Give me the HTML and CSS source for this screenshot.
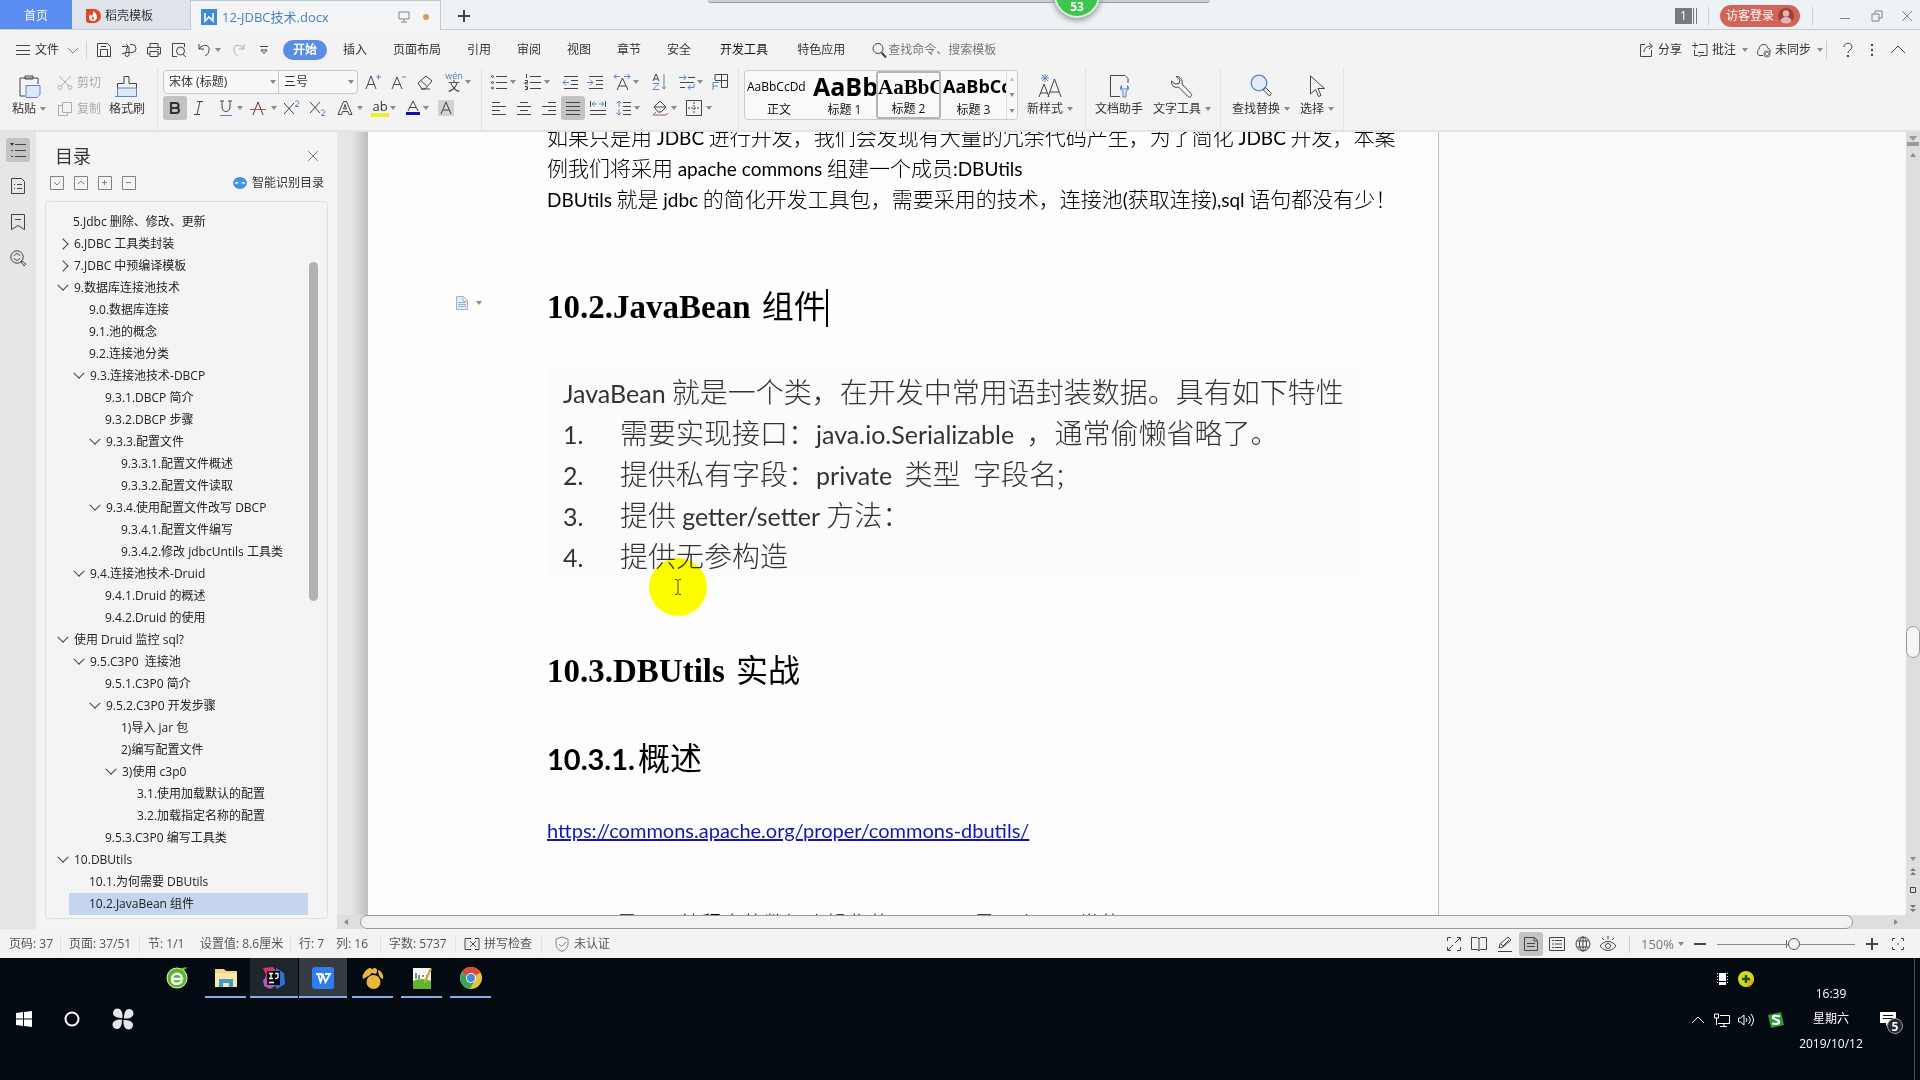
FILE: index.html
```html
<!DOCTYPE html>
<html lang="zh-CN">
<head>
<meta charset="utf-8">
<title>12-JDBC技术.docx</title>
<link rel="stylesheet" href="styles.css">
</head>
<body>
<div class="app">
  <header class="titlebar">
    <button class="tab tab-home">首页</button>
    <button class="tab tab-docer">
      <svg class="i16" viewBox="0 0 16 16"><path d="M1 1h8a7 7 0 0 1 0 14H4a3 3 0 0 1-3-3z" fill="#e0491f"/><path d="M8 3c3 2 4 4 4 6a4 4 0 0 1-8 0c0-1 1-2 1-3l2 2c1-1 1-3 1-5z" fill="#fff"/><path d="M8 8c1 1 1 3 0 4-2-1-1-3 0-4z" fill="#e0491f"/></svg>
      稻壳模板</button>
    <div class="tab tab-doc">
      <svg class="i16" viewBox="0 0 16 16"><path d="M0 0h16v16H0z" fill="#3f8ad8"/><path d="M4 4v8l4-4 4 4V4" fill="none" stroke="#fff" stroke-width="1.600"/></svg>
      <span class="doc-name">12-JDBC技术.docx</span>
      <svg class="i12" viewBox="0 0 12 12"><path d="M1 1h10v7H1zM6 8v3M3 11h6" class="s-gray"/></svg>
      <i class="dirty"></i>
    </div>
    <button class="newtab" aria-label="新建"><svg class="i12" viewBox="0 0 12 12"><path d="M6 0v12M0 6h12" class="s2"/></svg></button>
    <div class="win-tools">
      <span class="count"><b>1</b></span>
      <i class="vsep"></i>
      <button class="login">访客登录 <svg class="i16" viewBox="0 0 16 16"><circle cx="8" cy="8" r="8" fill="#a0403c"/><circle cx="8" cy="5.500" r="3.200" fill="#e3b5b5"/><path d="M2.500 13.500c0-6 11-6 11 0a8 8 0 0 1-11 0z" fill="#e3b5b5"/></svg></button>
      <i class="vsep"></i>
      <button aria-label="最小化"><svg class="i12" viewBox="0 0 12 12"><path d="M1 8.500h10" class="s-gray"/></svg></button>
      <button aria-label="还原"><svg class="i12" viewBox="0 0 12 12"><path d="M1 4h7v7H1zM4 4V1h7v7H8" class="s-gray"/></svg></button>
      <button aria-label="关闭"><svg class="i12" viewBox="0 0 12 12"><path d="M1 1l10 10M11 1L1 11" class="s-gray"/></svg></button>
    </div>
    <div class="float-bar"></div>
    <div class="float-ball">53</div>
  </header>

  <nav class="menubar">
    <div class="quick">
      <button class="lab"><svg class="i16" viewBox="0 0 16 16"><path d="M1 3.500h14M1 8.500h14M1 12.500h14" class="s"/></svg>文件</button>
      <svg class="i12" viewBox="0 0 12 12"><path d="M1 4l5 5 5-5" class="s-gray"/></svg>
      <i class="vsep"></i>
      <button aria-label="保存"><svg class="i16" viewBox="0 0 16 16"><path d="M1.500 14.500v-13h10l3 3v10zM4.500 14V7.500h7V14M5 4.500h5" class="s"/></svg></button>
      <button aria-label="输出"><svg class="i16" viewBox="0 0 16 16"><path d="M1 4.500h6M5 2l2.500 2.500L5 7M9 2.500h2a4 4 0 0 1 0 8H5.500M1 11.500c3 0 5-1 5-5M6 10.500a2 2 0 1 0 2 2V5" class="s"/></svg></button>
      <button aria-label="打印"><svg class="i16" viewBox="0 0 16 16"><path d="M4 5V1.500h8V5M4 12H1.500V5.500h13V12H12M4 9.500h8v5H4zM11 7.500h2" class="s"/></svg></button>
      <button aria-label="预览"><svg class="i16" viewBox="0 0 16 16"><path d="M13.500 5V1.500h-12v13H6M12 12.500l3 2.500" class="s"/><circle cx="9.500" cy="9" r="4" class="s"/><path d="M1.500 1.500v13" class="s"/></svg></button>
      <button aria-label="撤销"><svg class="i16" viewBox="0 0 16 16"><path d="M3 2v5h5M3 7c3-5 11-5 10 1 0 3-2 5-4 6" class="s"/></svg></button>
      <i class="caret"></i>
      <button aria-label="恢复"><svg class="i16" viewBox="0 0 16 16"><path d="M13 2v5H8M13 7C10 2 2 2 3 8c0 3 2 5 4 6" class="s-light"/></svg></button>
      <svg class="i12" viewBox="0 0 12 12"><path d="M2 2.500h8M3 6l3 3.500L9 6z" class="s"/></svg>
    </div>
    <div class="tabs">
      <button class="on">开始</button><button>插入</button><button>页面布局</button><button>引用</button><button>审阅</button><button>视图</button><button>章节</button><button>安全</button><button class="dark">开发工具</button><button>特色应用</button>
      <label class="search"><svg class="i16" viewBox="0 0 16 16"><circle cx="7" cy="6.500" r="5" class="s"/><path d="M10.500 10.500l4.500 5" class="s2"/></svg><input type="text" placeholder="查找命令、搜索模板"></label>
    </div>
    <div class="menu-right">
      <button class="lab"><svg class="i16" viewBox="0 0 16 16"><path d="M7 2.500H2.500v12h11V8M6 10c0-4 3-6 8-6M11 1l3.500 3L11 7" class="s"/></svg>分享</button>
      <button class="lab"><svg class="i16" viewBox="0 0 16 16"><path d="M7 2.500h8v11H9l-2 1-1-1H2.500V8M6 10.500h6M0 3.500h6M3 .5v6" class="s"/></svg>批注<i class="caret"></i></button>
      <button class="lab"><svg class="i16" viewBox="0 0 16 16"><path d="M8 13.500H4a3.500 3.500 0 0 1 0-6c0-6 8-7 9-1 2 0 2.500 2 2 4" class="s"/><circle cx="12" cy="12" r="3.500" fill="#888"/><path d="M10.500 10.500l3 3m0-3l-3 3" stroke="#fff"/></svg>未同步<i class="caret"></i></button>
      <i class="vsep"></i>
      <button aria-label="帮助"><svg class="i16" viewBox="0 0 16 16"><path d="M4 5c0-5 8-5 8 0 0 3-4 3-4 6" class="s"/><path d="M8 13v2" class="s2"/></svg></button>
      <button aria-label="更多"><svg class="i16" viewBox="0 0 16 16"><path d="M8 2v2M8 7v2M8 12v2" class="s2"/></svg></button>
      <button aria-label="收起"><svg class="i16" viewBox="0 0 16 16"><path d="M1 11l7-7 7 7" class="s"/></svg></button>
    </div>
  </nav>

  <section class="ribbon">
    <div class="grp clip">
      <button class="big"><svg class="i24" viewBox="0 0 24 24"><path d="M8 22H3V4h18v6M8 5V2h8v3z" class="s"/><path d="M9 11.500h14v9l-3 3H9z" fill="#dce8fa" stroke="#5d87c8"/></svg><span>粘贴<i class="caret"></i></span></button>
      <div class="two">
        <button class="lab off"><svg class="i16" viewBox="0 0 16 16"><path d="M2 1l10 10M14 1L4 11" class="s-light"/><circle cx="3" cy="12.500" r="2" class="s-light"/><circle cx="13" cy="12.500" r="2" class="s-light"/></svg>剪切</button>
        <button class="lab off"><svg class="i16" viewBox="0 0 16 16"><path d="M5.500 1.500h9v10h-9zM5 4.500H1.500v10h9V12" class="s-light"/></svg>复制</button>
      </div>
      <button class="big"><svg class="i24" viewBox="0 0 24 24"><path d="M2.500 14V9.500H9V2.500h5v7h7.500V14" class="s"/><path d="M2.500 14h19v8.500h-19zM0 22.500h3" fill="#dce8fa" stroke="#5d87c8"/></svg><span>格式刷</span></button>
    </div>
    <div class="grp font">
      <div class="row f1">
        <div class="combo"><div class="pick name"><select aria-label="字体"><option>宋体 (标题)</option></select><i class="caret"></i></div><div class="pick size"><select aria-label="字号"><option>三号</option></select><i class="caret"></i></div></div>
        <button aria-label="增大字号"><svg class="i16" viewBox="0 0 16 16"><path d="M1 15L6 2l5 13M3 10.500h6" class="s"/><path d="M11 3h5M13.500 .5v5" class="s-blue"/></svg></button>
        <button aria-label="减小字号"><svg class="i16" viewBox="0 0 16 16"><path d="M1 15L6 3l5 12M3 10.500h6" class="s"/><path d="M11 3h4" class="s-blue"/></svg></button>
        <button aria-label="清除格式"><svg class="i16" viewBox="0 0 16 16"><path d="M1 9l8-7 6 5-7 8H5zM4 6.500l6 6M4 15h9" class="s"/></svg></button>
        <button aria-label="拼音" class="pin"><small>wén</small><span>文</span></button><i class="caret"></i>
      </div>
      <div class="row f2">
        <button class="tog" aria-label="加粗"><svg class="i16" viewBox="0 0 16 16"><path d="M4 3h5a2.500 2.500 0 0 1 0 5H4zM4 8h5.500a2.500 2.500 0 0 1 0 5H4z" fill="none" stroke="#333" stroke-width="2.200"/></svg></button>
        <button aria-label="倾斜"><svg class="i16" viewBox="0 0 16 16"><path d="M6 1.500h6M3 14.500h6M9 1.500l-3 13" class="s"/></svg></button>
        <button aria-label="下划线"><svg class="i16" viewBox="0 0 16 16"><path d="M4 1v6c0 6 8 6 8 0V1M2 1h4M10 1h4" class="s"/><path d="M2 15.500h12" class="s-blue"/></svg></button><i class="caret"></i>
        <button aria-label="删除线"><svg class="i16" viewBox="0 0 16 16"><path d="M3 15L8 2l5 13" class="s"/><path d="M0 9.500h16" stroke="#b5543f"/></svg></button><i class="caret"></i>
        <button aria-label="上标"><svg class="i16" viewBox="0 0 16 16"><path d="M0 3l10 11M10 3L0 14" class="s"/><path d="M11 2c1-2 4-1 4 1l-4 3.500h4" class="s-blue"/></svg></button>
        <button aria-label="下标"><svg class="i16" viewBox="0 0 16 16"><path d="M0 2l10 11M10 2L0 13" class="s"/><path d="M11 11c1-2 4-1 4 1l-4 3.500h4" class="s-blue"/></svg></button>
        <button aria-label="文字效果"><svg class="i16" viewBox="0 0 16 16"><path d="M1 14.500L6.500 1.500h3l5.500 13h-3l-1-3H5.500l-1 3zM6.500 9L8 4.500 9.500 9z" class="s"/></svg></button><i class="caret"></i>
        <button aria-label="突出显示" class="hl"><span>ab</span></button><i class="caret"></i>
        <button aria-label="字体颜色"><svg class="i16" viewBox="0 0 16 16"><path d="M3 11L8 1l5 10M5 7.500h6" class="s"/><path d="M1 13.500h14" stroke="#1010b0" stroke-width="3"/></svg></button><i class="caret"></i>
        <button aria-label="字符底纹"><svg class="i16" viewBox="0 0 16 16"><path d="M0 0h16v16H0z" fill="#d2d2d2"/><path d="M3 14L8 2l5 12M5 10h6" class="s"/></svg></button>
      </div>
    </div>
    <div class="grp para">
      <div class="row p1">
        <svg class="i16" viewBox="0 0 16 16"><path d="M5 2.500h11M5 8.500h11M5 14.500h11" class="s"/><circle cx="1.500" cy="2.500" r="1" class="s"/><circle cx="1.500" cy="8.500" r="1" class="s"/><circle cx="1.500" cy="14" r="1" class="s"/></svg><i class="caret"></i>
        <svg class="i16" viewBox="0 0 16 16"><path d="M5 2.500h11M5 8.500h11M5 14.500h11M1.500 0v4M0 6.500h2.500v2H0v1.500h3M0 12.500h2.500v3H0M1 14h1" class="s"/></svg><i class="caret"></i>
        <svg class="i16" viewBox="0 0 16 16"><path d="M2 2.500h14M9 6.500h7M9 10.500h7M2 14.500h14" class="s"/><path d="M7 8.500H1M4 5.500l-3 3 3 3" class="s-blue"/></svg>
        <svg class="i16" viewBox="0 0 16 16"><path d="M2 2.500h14M9 6.500h7M9 10.500h7M2 14.500h14" class="s"/><path d="M0 8.500h6M3 5.500l3 3-3 3" class="s-blue"/></svg>
        <svg class="i16" viewBox="0 0 16 16"><path d="M3 16L8.500 4 14 16M5 12h7" class="s"/><path d="M0 2.500h6M2.500 0L0 2.500 2.500 5M10 2.500h6M13.500 0L16 2.500 13.500 5" class="s-blue"/></svg><i class="caret"></i>
        <svg class="i16" viewBox="0 0 16 16"><path d="M2 7l3-7 3 7M3 5h4" class="s"/><path d="M2 9.500h6l-6 6h6M13 0v15l-2-2.500M13 15l2-2.500" class="s-blue"/></svg>
        <svg class="i16" viewBox="0 0 16 16"><path d="M9 3.500h7M1 8.500h14M1 13.500h5" class="s"/><path d="M0 3.500h7M4.500 1L7 3.500 4.500 6M15 10v3.500H9M11.500 11L9 13.500l2.500 2.500" class="s-blue"/></svg><i class="caret"></i>
        <svg class="i16" viewBox="0 0 16 16"><path d="M3 6V.5h12.500v13H9M9.500 .5v13M3 6.500h12.500" class="s"/><path d="M1 16V8.500h6M1 12h5" class="s-blue"/></svg>
      </div>
      <div class="row p2">
        <svg class="i16" viewBox="0 0 16 16"><path d="M1 2.500h8M1 6.500h14M1 10.500h8M1 14.500h14" class="s"/></svg>
        <svg class="i16" viewBox="0 0 16 16"><path d="M4 2.500h8M1 6.500h14M4 10.500h8M1 14.500h14" class="s"/></svg>
        <svg class="i16" viewBox="0 0 16 16"><path d="M7 2.500h8M1 6.500h14M7 10.500h8M1 14.500h14" class="s"/></svg>
        <button class="tog" aria-label="两端对齐"><svg class="i16" viewBox="0 0 16 16"><path d="M1 2.500h14M1 6.500h14M1 10.500h14M1 14.500h14" class="s"/></svg></button>
        <svg class="i16" viewBox="0 0 16 16"><path d="M.5 1v6M15.500 1v6M0 10.500h16M0 14.500h16" class="s"/><path d="M2 4h5M4.500 1.500L2 4l2.500 2.500M9 4h5M11.500 1.500L14 4l-2.500 2.500" class="s-blue"/></svg>
        <svg class="i16" viewBox="0 0 16 16"><path d="M7 2.500h8M7 6.500h8M7 10.500h8M7 14.500h8" class="s"/><path d="M3 1v6M.5 3.500L3 1l2.500 2.500M3 9v6M.5 12.500L3 15l2.500-2.500" class="s-blue"/></svg><i class="caret"></i>
        <svg class="i16" viewBox="0 0 16 16"><path d="M2 7l6-6 6 6-5 5H6zM2 7h11" class="s"/><path d="M4 12l-3 3h13l2-2" stroke="#9a5f5f" fill="none"/></svg><i class="caret"></i>
        <svg class="i16" viewBox="0 0 16 16"><path d="M.5 .5h15v15H.5z" class="s"/><path d="M8 2v12M2 8h12" class="s" stroke-dasharray="2 1"/></svg><i class="caret"></i>
      </div>
    </div>
    <div class="grp style">
      <div class="gallery">
        <button><span class="s-normal">AaBbCcDd</span>正文</button>
        <button><span class="s-h1">AaBb</span>标题 1</button>
        <button class="sel"><span class="s-h2">AaBbC</span>标题 2</button>
        <button><span class="s-h3">AaBbCc</span>标题 3</button>
        <div class="gal-scroll"><i class="caret up"></i><i class="caret"></i><i class="caret bar"></i></div>
      </div>
      <button class="big"><svg class="i24" viewBox="0 0 24 24"><path d="M1 23L6 10l5 13M2.500 19h7M10 23L16.500 5 23 23M12 18h9" class="s"/><path d="M7 0v8M3 4h8M4 1l6 6M10 1L4 7" class="s-blue"/></svg><span>新样式<i class="caret"></i></span></button>
    </div>
    <div class="grp">
      <button class="big"><svg class="i24" viewBox="0 0 24 24"><path d="M13 22.500H3.500v-21H18l3 3V9" class="s"/><path d="M14.500 11.500c-2 2-1 5 1.500 6v5.500h3v-5.500c2.500-1 3.500-4 1.500-6V15h-6z" fill="#dce8fa" stroke="#5d87c8"/></svg><span>文档助手</span></button>
      <button class="big"><svg class="i24" viewBox="0 0 24 24"><path d="M6 2.500l4 3.500-1 3.500-4 .5-3.500-3c0 6 4 7 7 6l9.500 9.500c2 2 5-1 3-3L12 10c1-4-2-8-6-7.500z" class="s"/></svg><span>文字工具<i class="caret"></i></span></button>
    </div>
    <div class="grp find">
      <button class="big"><svg class="i24" viewBox="0 0 24 24"><circle cx="10" cy="9" r="7.800" fill="#e3edfa" stroke="#5d87c8" stroke-width="1.300"/><path d="M15 14.500l1.500-1 6 6-2 2.500-6-6z" class="s"/></svg><span>查找替换<i class="caret"></i></span></button>
      <button class="big"><svg class="i24" viewBox="0 0 24 24"><path d="M5.500 2v18l5-4.500 3 7 2.500-1-3-7h6.500z" class="s"/></svg><span>选择<i class="caret"></i></span></button>
    </div>
  </section>

  <main class="work">
    <aside class="rail">
      <button class="tog" aria-label="目录"><svg class="i16" viewBox="0 0 16 16"><path d="M5 2.500h11M5 8.500h11M5 14.500h11M1 8.500h2M1 14.500h2" class="s"/><path d="M0 1h4L2 4z" fill="#333"/></svg></button>
      <button aria-label="章节"><svg class="i16" viewBox="0 0 16 16"><path d="M1.500 .5h10l3 3v12h-13zM4 6.500h1M7 6.500h5M4 10.500h1M7 10.500h5" class="s"/></svg></button>
      <button aria-label="书签"><svg class="i16" viewBox="0 0 16 16"><path d="M1.500 .5h13v15l-6.500-4-6.500 4zM5 5.500h6" class="s"/></svg></button>
      <button aria-label="查找"><svg class="i16" viewBox="0 0 16 16"><circle cx="7" cy="7" r="6.200" class="s"/><path d="M4 6c1-3 5-3 6 0M10 8c-1 3-5 3-6 0M11 12l1-1 4 3-2 2z" class="s"/></svg></button>
    </aside>
    <aside class="outline">
      <div class="out-head"><h2>目录</h2><button aria-label="关闭"><svg class="i12" viewBox="0 0 12 12"><path d="M1 1l10 10M11 1L1 11" class="s-gray"/></svg></button></div>
      <div class="out-tools">
        <button aria-label="展开"><svg class="i14" viewBox="0 0 14 14"><path d="M.5 .5h13v13H.5zM4 6l3 3 3-3" class="s-gray"/></svg></button>
        <button aria-label="收起"><svg class="i14" viewBox="0 0 14 14"><path d="M.5 .5h13v13H.5zM4 8l3-3 3 3" class="s-gray"/></svg></button>
        <button aria-label="增加"><svg class="i14" viewBox="0 0 14 14"><path d="M.5 .5h13v13H.5zM4 6.500h5M6.500 4v5" class="s-gray"/></svg></button>
        <button aria-label="减少"><svg class="i14" viewBox="0 0 14 14"><path d="M.5 .5h13v13H.5zM4 6.500h5" class="s-gray"/></svg></button>
        <button class="smart"><svg class="i14" viewBox="0 0 14 14"><ellipse cx="7" cy="7" rx="7" ry="6" fill="#3f94e4"/><path d="M2.500 8c.5-2 2-2 2.500-.5M9 7.500c.5-1.500 2-1.500 2.500.5" fill="none" stroke="#fff" stroke-width="1.300"/></svg>智能识别目录</button>
      </div>
      <div class="tree-box">
        <ul class="tree">
          <li class="l1">5.Jdbc 删除、修改、更新</li>
          <li class="l1 shut">6.JDBC 工具类封装</li>
          <li class="l1 shut">7.JDBC 中预编译模板</li>
          <li class="l1 open">9.数据库连接池技术</li>
          <li class="l2">9.0.数据库连接</li>
          <li class="l2">9.1.池的概念</li>
          <li class="l2">9.2.连接池分类</li>
          <li class="l2 open">9.3.连接池技术-DBCP</li>
          <li class="l3">9.3.1.DBCP 简介</li>
          <li class="l3">9.3.2.DBCP 步骤</li>
          <li class="l3 open">9.3.3.配置文件</li>
          <li class="l4">9.3.3.1.配置文件概述</li>
          <li class="l4">9.3.3.2.配置文件读取</li>
          <li class="l3 open">9.3.4.使用配置文件改写 DBCP</li>
          <li class="l4">9.3.4.1.配置文件编写</li>
          <li class="l4">9.3.4.2.修改 jdbcUntils 工具类</li>
          <li class="l2 open">9.4.连接池技术-Druid</li>
          <li class="l3">9.4.1.Druid 的概述</li>
          <li class="l3">9.4.2.Druid 的使用</li>
          <li class="l1 open">使用 Druid 监控 sql?</li>
          <li class="l2 open">9.5.C3P0&nbsp; 连接池</li>
          <li class="l3">9.5.1.C3P0 简介</li>
          <li class="l3 open">9.5.2.C3P0 开发步骤</li>
          <li class="l4">1)导入 jar 包</li>
          <li class="l4">2)编写配置文件</li>
          <li class="l4 open">3)使用 c3p0</li>
          <li class="l5">3.1.使用加载默认的配置</li>
          <li class="l5">3.2.加载指定名称的配置</li>
          <li class="l3">9.5.3.C3P0 编写工具类</li>
          <li class="l1 open">10.DBUtils</li>
          <li class="l2">10.1.为何需要 DBUtils</li>
          <li class="l2 current">10.2.JavaBean 组件</li>
        </ul>
        <div class="tree-scroll"></div>
      </div>
    </aside>
    <div class="gutter"></div>
    <div class="canvas">
      <article class="page">
        <p>如果只是用 <span class="la">JDBC</span> 进行开发，我们会发现有大量的冗余代码产生，为了简化 <span class="la">JDBC</span> 开发，本案</p>
        <p>例我们将采用 <span class="la">apache commons</span> 组建一个成员<span class="la">:DBUtils</span></p>
        <p><span class="la">DBUtils</span> 就是 <span class="la">jdbc</span> 的简化开发工具包，需要采用的技术，连接池<span class="la">(</span>获取连接<span class="la">),sql</span> 语句都没有少！</p>
        <h2 class="first"><b>10.2.JavaBean</b> 组件<i class="cursor"></i>
          <span class="para-mark"><svg class="i14" viewBox="0 0 14 14"><path d="M1.500 .5h7l4 4v9h-11zM8 1v4h4M3 6.500h8M3 8.500h8M3 10.500h8" fill="#e6edf5" stroke="#9db3cc"/></svg><i class="caret"></i></span></h2>
        <div class="figure">
          <div class="intro"><b>JavaBean</b> 就是一个类，在开发中常用语封装数据。具有如下特性</div>
          <ol>
            <li><b>1.</b><span>需要实现接口：<b>java.io.Serializable</b> &nbsp;，通常偷懒省略了。</span></li>
            <li><b>2.</b><span>提供私有字段：<b>private</b> &nbsp;类型 &nbsp;字段名;</span></li>
            <li><b>3.</b><span>提供 <b>getter/setter</b> 方法：</span></li>
            <li><b>4.</b><span>提供无参构造</span></li>
          </ol>
          <div class="spot"><svg class="i16" viewBox="0 0 16 16"><path d="M5 .5h2l1 1 1-1h2M8 1v14M5 15.500h2l1-1 1 1h2" class="s"/></svg></div>
        </div>
        <h2><b>10.3.DBUtils</b> 实战</h2>
        <h3><b>10.3.1.</b>概述</h3>
        <p class="link"><a href="https://commons.apache.org/proper/commons-dbutils/">https://commons.apache.org/proper/commons-dbutils/</a></p>
        <p class="last"><span class="la">DBUtils</span> 是 <span class="la">java</span> 编程中的数据库操作使用工具，是一个工具类使用。</p>
      </article>
      <div class="beyond"></div>
    </div>
    <div class="vscroll">
      <svg class="i14" viewBox="0 0 14 14"><path d="M3 1h8L7 6zM1 7h12v4H1z" fill="#999"/></svg>
      <i class="caret up"></i>
      <div class="vtrack"><div class="vthumb"></div></div>
      <i class="caret"></i>
      <svg class="i14" viewBox="0 0 14 14"><path d="M4 6h6L7 3zM4 10h6L7 7z" fill="#777"/></svg>
      <svg class="i14" viewBox="0 0 14 14"><path d="M4.500 4.500h5v5h-5z" class="s"/></svg>
      <svg class="i14" viewBox="0 0 14 14"><path d="M4 4h6L7 7zM4 8h6l-3 3z" fill="#777"/></svg>
    </div>
    <div class="hscroll"><i class="caret left"></i><div class="hthumb"></div><i class="caret right"></i></div>
  </main>

  <footer class="status">
    <div class="st-left">
      <span>页码: 37</span><span class="ln">页面: 37/51</span><span class="ln">节: 1/1</span><span>设置值: 8.6厘米</span><span class="ln">行: 7</span><span>列: 16</span><span class="ln">字数: 5737</span>
      <button class="ln lab"><svg class="i16" viewBox="0 0 16 16"><path d="M7 2.500H1v11h6M11 2.500h4v11h-4M6 5l6 6M12 5l-6 6" class="s"/></svg>拼写检查</button>
      <button class="ln lab cert"><svg class="i16" viewBox="0 0 16 16"><path d="M8 1l6 2v5c0 4-3 6-6 7.500C5 14 2 12 2 8V3zM5 8l2.500 2.500L12 6" class="s-gray"/></svg>未认证</button>
    </div>
    <div class="st-right">
      <button aria-label="全屏"><svg class="i16" viewBox="0 0 16 16"><path d="M1.500 5V1.500H5M11 1.500h3.500V5M14.500 11v3.500H11M5 14.500H1.500V11M9 7l5-5M7 9l-5 5" class="s"/></svg></button>
      <button aria-label="阅读"><svg class="i16" viewBox="0 0 16 16"><path d="M8 3L6.500 1.500h-6v12h6L8 15l1.500-1.500h6v-12h-6zM8 3v12" class="s"/></svg></button>
      <button aria-label="写作"><svg class="i16" viewBox="0 0 16 16"><path d="M1 15.500h14M2 12l1-4 8-7 3 3-8 7zM4 8l2 2 6-6" class="s"/></svg></button>
      <button class="tog" aria-label="页面"><svg class="i16" viewBox="0 0 16 16"><path d="M1.500 1.500h10l3 3v10h-13zM11 2v3h3M4 7.500h8M4 10.500h8" class="s"/></svg></button>
      <button aria-label="大纲"><svg class="i16" viewBox="0 0 16 16"><path d="M.5 1.500h15v13H.5zM3 4.500h2M6 4.500h7M3 8h2M6 8h7M3 11.500h2M6 11.500h7" class="s"/></svg></button>
      <button aria-label="网页"><svg class="i16" viewBox="0 0 16 16"><circle cx="8" cy="8" r="7" class="s"/><ellipse cx="8" cy="8" rx="3.500" ry="7" class="s"/><path d="M2 5h12M2 11h12M8 1v14" class="s"/></svg></button>
      <button aria-label="护眼"><svg class="i16" viewBox="0 0 16 16"><path d="M0 10c4-6 12-6 16 0-4 6-12 6-16 0zM8 0v3M2 2l2 2M14 2l-2 2" class="s"/><circle cx="8" cy="10" r="2.500" class="s"/></svg></button>
      <i class="vsep"></i>
      <button class="zoom">150%<i class="caret"></i></button>
      <button aria-label="缩小"><svg class="i12" viewBox="0 0 12 12"><path d="M0 6h12" class="s2"/></svg></button>
      <input type="range" aria-label="缩放" min="0" max="100" value="56">
      <button aria-label="放大"><svg class="i12" viewBox="0 0 12 12"><path d="M0 6h12M6 0v12" class="s2"/></svg></button>
      <button aria-label="适合"><svg class="i12" viewBox="0 0 12 12"><path d="M.5 3V.5H3M9 .5h2.500V3M11.500 9v2.500H9M3 11.500H.5V9M5 6h2" class="s"/></svg></button>
    </div>
  </footer>

  <div class="taskbar">
    <div class="start">
      <button aria-label="开始"><svg class="i22" viewBox="0 0 22 22"><path d="M3 5l7-1v6.500H3zM11 4l8-1v7.500h-8zM3 11.500h7V18l-7-1zM11 11.500h8V19l-8-1z" fill="#fff"/></svg></button>
      <button aria-label="搜索"><svg class="i22" viewBox="0 0 22 22"><circle cx="11" cy="11" r="6.500" fill="none" stroke="#fff" stroke-width="2"/></svg></button>
      <button aria-label="桌面"><svg class="i22" viewBox="0 0 22 22"><g fill="#e4e6e8"><path d="M10.500 10C6 10 1 9 1 5a4.500 4.500 0 0 1 4.500-4.500c4 0 5.500 5 5 9.500z"/><path d="M12 10.500C12 6 13 1 17 1a4.500 4.500 0 0 1 4.500 4.500c0 4-5 5.500-9.500 5z"/><path d="M11.500 12c4.500 0 9.500 1 9.500 5a4.500 4.500 0 0 1-4.500 4.500c-4 0-5.500-5-5-9.500z"/><path d="M10 11.500c0 4.500-1 9.500-5 9.500A4.500 4.500 0 0 1 .5 16.500c0-4 5-5.500 9.500-5z"/></g></svg></button>
    </div>
    <div class="apps">
      <button class="plain" aria-label="浏览器"><svg class="i22" viewBox="0 0 22 22"><circle cx="11" cy="11" r="10.500" fill="#d5f0b5"/><circle cx="11" cy="11" r="9.500" fill="#58b52c"/><path d="M6 12h10c0-7-10-7-10 0 0 6 7 6 10 2" fill="none" stroke="#fff" stroke-width="2.500"/><path d="M14 2c2-1 5-2 8-1-2 0-4 1-5 3z" fill="#76cf3a"/></svg></button>
      <button aria-label="文件夹"><svg class="i22" viewBox="0 0 22 22"><path d="M0 2h9l2 2h11v16H0z" fill="#f5d77c"/><path d="M0 6h22v14H0z" fill="#fbe7a0"/><path d="M4 20v-8h14v8h-4v-4H8v4z" fill="#3a9fcf"/></svg></button>
      <button class="act" aria-label="IntelliJ"><svg class="i22" viewBox="0 0 22 22"><path d="M0 1l10-1 4 6-8 9-5-2 2-5z" fill="#d4366c"/><path d="M0 13l8-4 4 10-5 3-6-3z" fill="#b45ab8"/><path d="M13 1l8 5 1 11-8 5-4-6z" fill="#2f6fd8"/><path d="M4 4h13v14H4z" fill="#0a0a10"/><path d="M6 6.500h4M8 6.500v5M6 11.500h4M12 6.500h3v3.500q0 1.500-3 1.500M6 15.500h5" stroke="#fff" fill="none" stroke-width="1.300"/></svg></button>
      <button class="act cur" aria-label="WPS"><svg class="i22" viewBox="0 0 22 22"><rect width="22" height="22" rx="3" fill="#2f7ef0"/><path d="M4 7h5l2 4M6 7l2.500 8L11 8l2.500 7L18 7h-5" stroke="#fff" fill="none" stroke-width="1.800"/></svg></button>
      <button aria-label="DBeaver"><svg class="i22" viewBox="0 0 22 22"><circle cx="11.500" cy="15" r="7" fill="#e8b83a"/><path d="M1 12C-1 8 5 1 8 1c3 0 3 4 0 7zM10 6c-1-3 1-5 3-5s3 3 1 6zM16 3c4 1 6 6 5 9-2 0-5-4-5-9z" fill="#e8b83a"/></svg></button>
      <button aria-label="编辑器"><svg class="i22" viewBox="0 0 22 22"><path d="M2 1h18v20H2z" fill="#f4f6ef"/><path d="M2 14q9-4 18 0v8H2z" fill="#5fb52c"/><path d="M5 6v6M8 8v4M11 9h2M15 9h2" stroke="#222"/><path d="M13 14l6-13 2 1-6 13-2 2z" fill="#d8a13a"/></svg></button>
      <button aria-label="Chrome"><svg class="i22" viewBox="0 0 22 22"><circle cx="11" cy="11" r="11" fill="#e8c33c"/><path d="M11 11L1.500 5.500a11 11 0 0 1 19 0z" fill="#d94a3d"/><path d="M11 11L1.500 5.500A11 11 0 0 0 10 22l5-9z" fill="#3ba55a"/><circle cx="11" cy="11" r="5" fill="#fff"/><circle cx="11" cy="11" r="4" fill="#4a86e8"/></svg></button>
    </div>
    <div class="tray">
      <span></span>
      <svg class="i16" viewBox="0 0 16 16"><path d="M5 2h7v12H5z" fill="#fff"/><path d="M3.500 2v12M13.500 2v12" stroke="#fff" stroke-dasharray="1 2"/><path d="M5 10.500h7" stroke="#000"/></svg>
      <svg class="i16" viewBox="0 0 16 16"><circle cx="8" cy="8" r="8" fill="#cfdc1e"/><path d="M8 16a8 8 0 0 0 8-8l-4 1z" fill="#f0a515"/><path d="M8 4v8M4 8h8" stroke="#234d0c" stroke-width="2.500"/></svg>
      <span></span>
      <svg class="i16" viewBox="0 0 16 16"><path d="M2 11l6-6 6 6" class="s-white"/></svg>
      <svg class="i16" viewBox="0 0 16 16"><path d="M6 3.500h9.500v8H4M.5 2h4v4h-4zM2.500 6v7M10 12v2.500M6 14.500h7" class="s-white"/></svg>
      <svg class="i16" viewBox="0 0 16 16"><path d="M.5 6v4h2l3.500 3V3L2.500 6zM8 6q2 2 0 4M10.500 4q3.500 4 0 8M13 2q5 6 0 12" class="s-white"/></svg>
      <svg class="i16" viewBox="0 0 16 16"><path d="M0 3l13-3 3 13-13 3z" fill="#2f9c3c"/><path d="M12 4.500q-8-2-7 1.500l6 3q1 4-7 2.500" stroke="#fff" stroke-width="2.200" fill="none"/></svg>
    </div>
    <time class="clock"><span>16:39</span><span>星期六</span><span>2019/10/12</span></time>
    <div class="notice"><svg class="i16" viewBox="0 0 16 16"><path d="M0 1h16v11H9l-3 3v-3H0z" fill="#fff"/><path d="M3 4.500h10M3 7.500h10" stroke="#111"/></svg><b>5</b></div>
  </div>
</div>
</body>
</html>
```
FILE: styles.css
```css
* { box-sizing: border-box; }
body { margin: 0; font: 12px/18px "Open Sans", "Noto Sans CJK SC", sans-serif; color: #333; }
button { border: 0; padding: 0; margin: 0; background: none; font: inherit; color: inherit; display: flex; align-items: center; justify-content: center; white-space: nowrap; }
svg { display: block; flex: none; overflow: visible; }
.app { height: 100vh; display: flex; flex-direction: column; overflow: hidden; background: #f3f3f3; }
.i12 { width: 12px; height: 12px; }
.i14 { width: 14px; height: 14px; }
.i16 { width: 16px; height: 16px; }
.i22 { width: 22px; height: 22px; }
.i24 { width: 24px; height: 24px; }
.s { fill: none; stroke: #444; stroke-width: 1; }
.s2 { fill: none; stroke: #444; stroke-width: 2; }
.s-gray { fill: none; stroke: #808488; }
.s-light { fill: none; stroke: #b0b0b0; }
.s-blue { fill: none; stroke: #5d87c8; }
.s-white { fill: none; stroke: #fff; }
.caret { display: block; flex: none; width: 6px; height: 4px; background: #8a8a8a; clip-path: polygon(0 0, 100% 0, 50% 100%); }
.caret.up { clip-path: polygon(50% 0, 100% 100%, 0 100%); }
.caret.left { width: 4px; height: 6px; clip-path: polygon(0 50%, 100% 0, 100% 100%); }
.caret.right { width: 4px; height: 6px; clip-path: polygon(0 0, 100% 50%, 0 100%); }
.vsep { display: block; width: 1px; height: 18px; background: #cfcfcf; }
.lab { gap: 4px; }
.tog { width: 24px; height: 24px; border-radius: 3px; background: #c3c3c3; }

/* title bar */
.titlebar { position: relative; display: flex; height: 30px; flex: none; background: #eef2f5; border-bottom: 1px solid #c2ced8; }
.tab { padding-top: 3px; }
.tab-home { width: 72px; background: #5b8cf0; color: #fff; }
.tab-docer { width: 119px; background: #dfe4ea; justify-content: flex-start; padding-left: 13px; gap: 4px; border-right: 1px solid #bccad6; }
.tab-doc { width: 250px; height: 30px; display: flex; align-items: center; padding: 2px 11px 0 10px; gap: 5px; background: #f3f5f7; border: solid #bccad6; border-width: 1px 1px 0 0; color: #4a7fc0; }
.doc-name { font-size: 13px; flex: 1; }
.dirty { width: 6px; height: 6px; border-radius: 50%; background: #dd9a50; margin: 0 0 0 8px; }
.newtab { width: 46px; padding-top: 2px; }
.win-tools { margin-left: auto; display: grid; padding-top: 2px; grid-template-columns: 33px 12px 92px 27px 32px 30px 19px; align-items: center; justify-items: start; }
.count { border-right: 4px double #777; padding-right: 1px; display: flex; }
.count b { background: #757a7c; color: #fff; width: 17px; height: 16px; line-height: 16px; text-align: center; font-weight: 400; }
.login { width: 80px; height: 22px; border-radius: 11px; background: #d4645a; color: #fff; gap: 4px; }
.float-bar { position: absolute; left: 708px; top: 0; width: 502px; height: 3px; background: #cdd1d3; border-bottom: 1px solid #999d9f; border-radius: 0 0 4px 4px; }
.float-ball { position: absolute; left: 1054px; top: -28px; width: 46px; height: 46px; border-radius: 50%; background: #3fc44e; border: 2px solid #d5eddb; box-shadow: 0 2px 6px #888; color: #fff; font-weight: 700; line-height: 18px; padding-top: 24px; text-align: center; }

/* menu bar */
.menubar { height: 38px; flex: none; display: flex; align-items: center; padding-top: 2px; background: #f3f3f3; }
.quick { display: grid; padding-left: 15px; grid-template-columns: 52px 19px 10px 25px 25px 25px 25px 19px 16px 27px 25px; align-items: center; justify-items: start; }
.tabs { display: flex; align-items: center; gap: 26px; flex: 1; min-width: 0; }
.tabs .on { width: 44px; height: 20px; border-radius: 10px; background: #5b8ce6; color: #fff; font-weight: 700; margin-right: -10px; }
.tabs .dark { color: #111; margin: 0 3px; }
.search { display: flex; align-items: center; gap: 1px; }
.search input { border: 0; padding: 0; background: none; font: inherit; width: 130px; }
.search input::placeholder { color: #777; opacity: 1; }
.menu-right { display: grid; grid-template-columns: 54px 63px 71px 14px 24px 26px 30px; align-items: center; justify-items: start; }
.menu-right .caret { margin-left: 2px; }

/* ribbon */
.ribbon { height: 64px; flex: none; display: flex; background: #f3f3f3; border-bottom: 2px solid #e4e4e4; }
.grp { display: flex; padding: 2px 9px 0 9px; border-right: 1px solid #e2e2e2; gap: 10px; align-items: flex-start; }
.big { flex-direction: column; gap: 2px; height: 50px; }
.big span { display: flex; align-items: center; gap: 4px; }
.big .i24 { margin-top: 2px; }
.clip { width: 158px; padding-left: 12px; gap: 8px; }
.clip .two { display: grid; gap: 8px; padding-top: 4px; margin-left: 3px; }
.off { color: #aaa; }
.font, .para { flex-direction: column; gap: 2px; }
.font { padding-left: 5px; width: 324px; }
.para { width: 257px; padding-left: 9px; }
.row { display: grid; align-items: center; justify-items: start; height: 24px; }
.f1 { grid-template-columns: 202px 26px 26px 27px 21px 6px; }
.f2 { grid-template-columns: 28px 27px 19px 13px 21px 13px 26px 27px 20px 14px 19px 15px 18px 15px 16px; }
.combo { display: flex; width: 195px; height: 24px; border: 1px solid #c8c8c8; border-radius: 4px; background: #f8f8f8; }
.pick { display: flex; align-items: center; padding-right: 2px; }
.pick select { appearance: none; border: 0; background: none; padding: 0 5px; font: inherit; color: inherit; flex: 1; }
.name { width: 115px; border-right: 1px solid #c8c8c8; }
.size { flex: 1; padding-right: 3px; }
.pin { flex-direction: column; width: 20px; }
.pin small { font-size: 9px; line-height: 10px; color: #4a7fc0; }
.pin span { line-height: 12px; }
.hl span { width: 18px; line-height: 14px; font-size: 13px; border-bottom: 4px solid #eeee30; }
.p1 { grid-template-columns: 19px 15px 19px 18px 25px 27px 19px 18px 28px 18px 15px 16px; }
.p2 { grid-template-columns: 25px 25px 20px 29px 26px 18px 18px 19px 15px 20px 6px; }
.style { padding-left: 5px; width: 347px; }
.gallery { display: grid; grid-template-columns: 68px 63px 65px 65px 11px; height: 50px; border: 1px solid #ccc; border-radius: 4px; background: #f9f9f9; overflow: hidden; }
.gallery button { flex-direction: column; justify-content: flex-end; overflow: hidden; color: #111; line-height: 18px; align-items: center; }
.gallery span { display: flex; align-items: center; justify-content: flex-start; width: 100%; height: 30px; color: #000; padding-left: 2px; }
.gallery .s-normal { font: 12px "Open Sans"; }
.gallery .s-h1 { font: 700 25px "Open Sans"; padding-left: 0; }
.gallery .s-h2 { font: 700 21px "Liberation Serif"; padding-left: 0; }
.gallery .s-h3 { font: 700 18px "Open Sans"; }
.gallery .sel { border: 2px solid #b5b5b5; border-radius: 3px; line-height: 16px; }
.gal-scroll { display: grid; justify-items: center; align-items: center; border-left: 1px solid #ddd; }
.gal-scroll .up { background: #c4c4c4; }
.gal-scroll .caret { width: 5px; }
.style { gap: 9px; }
.find { padding-left: 11px; }

/* work area */
.work { flex: 1; min-height: 0; display: grid; grid-template-columns: 36px 301px 31px minmax(0, 1fr) 14px; grid-template-rows: minmax(0, 1fr) 14px; }
.rail { grid-row: 1 / 3; background: #e6e6e6; display: flex; flex-direction: column; align-items: center; gap: 12px; padding: 6px 1px 0 0; }
.rail button { width: 24px; height: 24px; }
.outline { grid-row: 1 / 3; background: #f4f4f4; padding: 0 9px 10px; display: flex; flex-direction: column; min-height: 0; }
.out-head { display: flex; justify-content: space-between; align-items: center; height: 40px; padding: 8px 9px 0 10px; }
.out-head h2 { margin: 0; font-size: 18px; line-height: 28px; font-weight: 400; }
.out-tools { display: flex; gap: 10px; padding: 0 4px 0 5px; height: 22px; margin-bottom: 7px; align-items: center; }
.smart { gap: 5px; margin-left: auto; }
.tree-box { position: relative; flex: 1; min-height: 0; border: 1px solid #e0e0e0; border-radius: 4px; overflow: hidden; padding-top: 9px; }
.tree { list-style: none; margin: 0 19px 0 23px; padding: 0; color: #222; }
.tree li { height: 22px; line-height: 22px; white-space: nowrap; display: flex; align-items: center; }
.tree li::before { content: ""; width: 7px; height: 7px; margin: 0 7px 0 -14px; flex: none; }
.tree .open::before, .tree .shut::before { border: solid #444; border-width: 0 1px 1px 0; transform: rotate(45deg) translate(-2px, -2px); }
.tree .shut::before { transform: rotate(-45deg); }
.l1 { padding-left: 4px; }
.l2 { padding-left: 20px; }
.l3 { padding-left: 36px; }
.l4 { padding-left: 52px; }
.l5 { padding-left: 68px; }
.current { background: #c5d5f0; }
.tree-scroll { position: absolute; right: 9px; top: 60px; width: 9px; height: 339px; border-radius: 5px; background: #b2b2b2; }
.gutter { background: linear-gradient(90deg, #e6e6e6 0 45%, #bfbfbf); }
.canvas { display: grid; grid-template-columns: minmax(0, 1071fr) minmax(0, 467fr); overflow: hidden; min-height: 0; }
.page { background: #fdfdfd; border-right: 1px solid #c4c4c4; padding-left: 179px; margin-top: -11px; color: #111; white-space: nowrap; }
.beyond { background: #f9f9f9; }
.page p { margin: 0; height: 31px; font: 300 21px/31px "Noto Sans CJK SC", sans-serif; color: #000; }
.page .la, .link a { font: 400 19px/1 Lato, sans-serif; }
.page h2, .page h3 { margin: 0; height: 48px; font: 400 32px/48px "Noto Sans CJK SC", sans-serif; color: #000; position: relative; }
.page h2 b { font: 700 33px/1 "Liberation Serif", serif; margin-right: 4px; }
.page h3 b { font: 700 29px/1 Lato, sans-serif; margin-right: 3px; }
.page .first { margin: 66px 0 38px; }
.cursor { display: inline-block; width: 2px; height: 38px; background: #000; vertical-align: -9px; }
.para-mark { position: absolute; left: -92px; top: 16px; display: flex; gap: 7px; align-items: center; }
.figure { position: relative; margin-right: 77px; height: 210px; padding: 5px 0 0 16px; background: #fbfbfb; font: 300 28px/41px "Noto Sans CJK SC", sans-serif; color: #333; }
.figure b { font: 400 25px/1 Lato, sans-serif; }
.figure ol { list-style: none; margin: 0; padding: 0; }
.figure .intro { height: 41px; }
.figure li { display: grid; grid-template-columns: 57px 1fr; align-items: baseline; height: 41px; }
.spot { position: absolute; left: 102px; top: 192px; width: 58px; height: 58px; border-radius: 50%; background: #ff0; display: grid; place-items: center; mix-blend-mode: multiply; }
.page .figure + h2 { margin: 68px 0 40px; }
.page .link { margin: 34px 0 62px; }
.page .link a { color: #1515b5; font-size: 20px; }
.vscroll { background: #dedede; display: flex; flex-direction: column; align-items: center; gap: 4px; padding-top: 3px; }
.vtrack { flex: 1; width: 14px; display: flex; flex-direction: column; }
.vtrack::before { content: ""; flex: 471; }
.vtrack::after { content: ""; flex: 197; }
.vthumb { height: 32px; border: 1px solid #999; border-radius: 7px; background: #f6f6f6; }
.hscroll { grid-column: 3 / 6; background: #dedede; display: flex; align-items: center; gap: 12px; padding: 0 22px 0 7px; }
.hthumb { flex: 1; height: 14px; border: 1px solid #999; border-radius: 7px; background: #f2f2f2; margin-right: 29px; }

/* status bar */
.status { height: 29px; flex: none; display: flex; justify-content: space-between; align-items: center; padding-top: 1px; background: #f3f3f3; color: #555; }
.st-left { display: grid; padding-left: 9px; grid-template-columns: 51px 79px 61px 90px 46px 44px 75px 86px 80px; align-items: center; }
.st-left > * { justify-content: flex-start; white-space: nowrap; }
.st-left .ln { border-left: 1px solid #e0e0e0; padding-left: 8px; }
.st-left .cert { padding-left: 12px; }
.st-right { display: grid; grid-template-columns: 25px 26px 22px 30px 26px 25px 29px 12px 53px 23px 149px 26px 28px; align-items: center; justify-items: start; }
.zoom { gap: 4px; color: #777; font-size: 13px; }
.st-right input { appearance: none; width: 138px; height: 14px; margin: 0; background: linear-gradient(#888, #888) center / 100% 1px no-repeat, linear-gradient(#666, #666) 50% 50% / 1px 8px no-repeat; }
.st-right input::-webkit-slider-thumb { appearance: none; width: 12px; height: 12px; border: 1px solid #555; border-radius: 50%; background: #f5f5f5; }

/* taskbar */
.taskbar { height: 122px; flex: none; display: flex; align-items: flex-start; background: #040a11; color: #fff; }
.start { display: grid; grid-template-columns: 48px 48px 54px; height: 122px; align-items: center; width: 152px; }
.apps { display: flex; }
.apps button { width: 49px; height: 40px; position: relative; }
.apps button::after { content: ""; position: absolute; bottom: 0; left: 4px; right: 4px; height: 2px; background: #83aee0; }
.apps .plain::after { display: none; }
.apps .act { background: #1e252b; border-right: 1px solid #04090f; }
.apps .cur { background: #343b42; }
.apps .act::after { left: 0; right: 0; }
.tray { margin-left: auto; display: grid; grid-template-columns: 24px 24px 30px 17px; grid-template-rows: 41px 41px; align-items: center; }
.clock { display: flex; flex-direction: column; align-items: center; line-height: 25px; width: 92px; padding-top: 23px; }
.notice { position: relative; width: 43px; height: 122px; padding: 53px 0 0 3px; border-right: 5px solid #04090f; box-shadow: inset -1px 0 #4a5056; }
.notice b { position: absolute; left: 10px; top: 60px; width: 16px; height: 16px; line-height: 15px; border-radius: 50%; background: #22282c; border: 1px solid #999; text-align: center; }
```
